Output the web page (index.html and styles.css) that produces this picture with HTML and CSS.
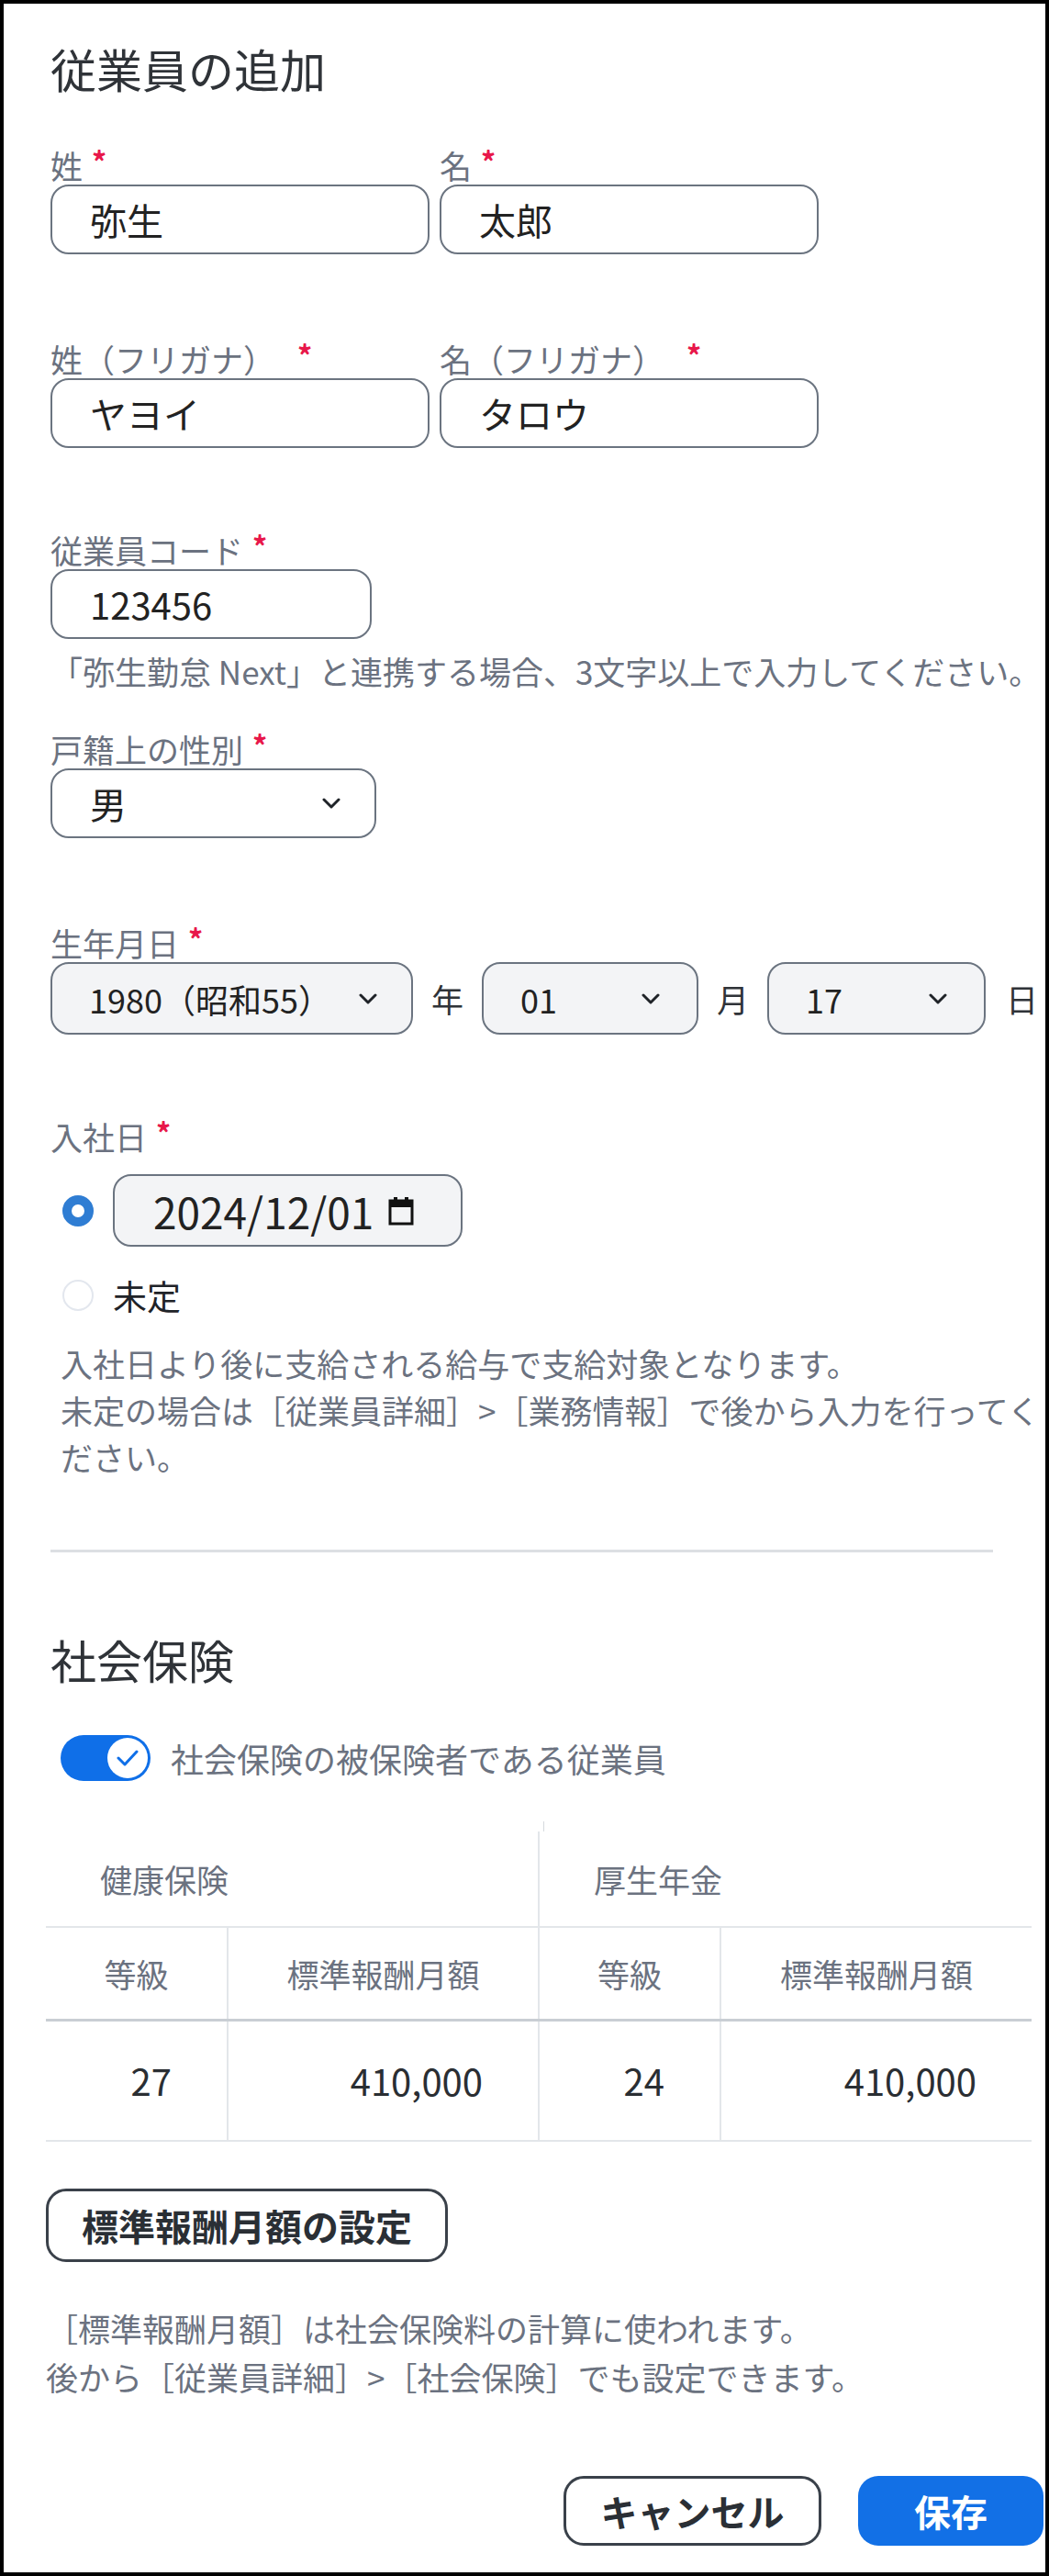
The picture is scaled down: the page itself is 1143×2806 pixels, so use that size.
FILE: index.html
```html
<!DOCTYPE html>
<html lang="ja">
<head>
<meta charset="utf-8">
<title>従業員の追加</title>
<link rel="stylesheet" href="styles.css">
</head>
<body>
<div class="dialog">
  <h1 class="title">従業員の追加</h1>

  <div class="form">
    <div class="field pair">
      <div class="col">
        <div class="label">姓<span class="req">*</span></div>
        <div class="input">弥生</div>
      </div>
      <div class="col">
        <div class="label">名<span class="req">*</span></div>
        <div class="input">太郎</div>
      </div>
    </div>

    <div class="field field-kana pair">
      <div class="col">
        <div class="label">姓（フリガナ）<span class="req req-wide">*</span></div>
        <div class="input">ヤヨイ</div>
      </div>
      <div class="col">
        <div class="label">名（フリガナ）<span class="req req-wide">*</span></div>
        <div class="input">タロウ</div>
      </div>
    </div>

    <div class="field field-help">
      <div class="label">従業員コード<span class="req">*</span></div>
      <div class="input input-code">123456</div>
      <div class="help help-code">「弥生勤怠 Next」と連携する場合、3文字以上で入力してください。</div>
    </div>

    <div class="field">
      <div class="label">戸籍上の性別<span class="req">*</span></div>
      <div class="input select select-gender">
        <span>男</span>
        <svg class="chev" viewBox="0 0 20 12" width="20" height="12"><path d="M2 2 L10 10 L18 2" fill="none" stroke="#1f2328" stroke-width="3" stroke-linecap="round" stroke-linejoin="round"/></svg>
      </div>
    </div>

    <div class="field field-birth">
      <div class="label">生年月日<span class="req">*</span></div>
      <div class="date-selects">
        <div class="input select select-filled select-year">
          <span>1980（昭和55）</span>
          <svg class="chev" viewBox="0 0 20 12" width="20" height="12"><path d="M2 2 L10 10 L18 2" fill="none" stroke="#1f2328" stroke-width="3" stroke-linecap="round" stroke-linejoin="round"/></svg>
        </div>
        <span class="unit">年</span>
        <div class="input select select-filled select-month">
          <span>01</span>
          <svg class="chev" viewBox="0 0 20 12" width="20" height="12"><path d="M2 2 L10 10 L18 2" fill="none" stroke="#1f2328" stroke-width="3" stroke-linecap="round" stroke-linejoin="round"/></svg>
        </div>
        <span class="unit">月</span>
        <div class="input select select-filled select-day">
          <span>17</span>
          <svg class="chev" viewBox="0 0 20 12" width="20" height="12"><path d="M2 2 L10 10 L18 2" fill="none" stroke="#1f2328" stroke-width="3" stroke-linecap="round" stroke-linejoin="round"/></svg>
        </div>
        <span class="unit unit-last">日</span>
      </div>
    </div>

    <div class="field-join">
      <div class="label">入社日<span class="req">*</span></div>
      <div class="radio-group">
        <div class="radio-row">
          <span class="radio radio-on"></span>
          <div class="input date-input">
            <span>2024/12/01</span>
            <svg class="cal" viewBox="0 0 28 32" width="28" height="32"><rect x="2" y="5" width="24" height="25" fill="none" stroke="#111" stroke-width="3"/><rect x="2" y="5" width="24" height="7" fill="#111"/><rect x="6" y="1" width="4" height="6" fill="#111"/><rect x="18" y="1" width="4" height="6" fill="#111"/></svg>
          </div>
        </div>
        <div class="radio-row radio-row-text">
          <span class="radio"></span>
          <span class="radio-text">未定</span>
        </div>
      </div>
      <div class="help help-join">入社日より後に支給される給与で支給対象となります。<br>未定の場合は［従業員詳細］&gt;［業務情報］で後から入力を行ってください。</div>
    </div>
  </div>

  <div class="divider"></div>

  <h2 class="section-title">社会保険</h2>

  <div class="toggle-row">
    <span class="toggle"><span class="knob"><svg viewBox="0 0 24 18" width="24" height="18"><path d="M2 9 L9 16 L22 2" fill="none" stroke="#0f6fe8" stroke-width="3" stroke-linecap="round" stroke-linejoin="round"/></svg></span></span>
    <span class="toggle-label">社会保険の被保険者である従業員</span>
  </div>

  <div class="table-wrap">
    <span class="tick"></span>
    <table class="grade-table">
      <colgroup>
        <col class="c-grade"><col class="c-amount"><col class="c-grade"><col class="c-amount">
      </colgroup>
      <thead>
        <tr class="head1">
          <th colspan="2" class="group">健康保険</th>
          <th colspan="2" class="group">厚生年金</th>
        </tr>
        <tr class="head2">
          <th>等級</th><th>標準報酬月額</th><th>等級</th><th>標準報酬月額</th>
        </tr>
      </thead>
      <tbody>
        <tr>
          <td>27</td><td>410,000</td><td>24</td><td>410,000</td>
        </tr>
      </tbody>
    </table>
  </div>

  <button class="btn btn-outline btn-setting" type="button">標準報酬月額の設定</button>

  <div class="help help-si">［標準報酬月額］は社会保険料の計算に使われます。<br>後から［従業員詳細］&gt;［社会保険］でも設定できます。</div>

  <div class="footer">
    <button class="btn btn-outline btn-cancel" type="button">キャンセル</button>
    <button class="btn btn-primary btn-save" type="button">保存</button>
  </div>
</div>
</body>
</html>
```

FILE: styles.css
```css
* { box-sizing: border-box; }
html, body { margin: 0; padding: 0; background: #fff; }
body {
  font-family: "Noto Sans CJK JP", "Noto Sans", sans-serif;
  color: #2f3338;
}
.dialog {
  width: 1143px;
  height: 2806px;
  border: 4px solid #000;
  padding: 40px 2px 0 46px;
  overflow: hidden;
}
.title {
  margin: 0 0 0 5px;
  font-size: 50px;
  line-height: 60px;
  font-weight: 400;
  color: #2f3338;
}
.form { padding-left: 5px; margin-top: 55px; }
.field { margin-bottom: 93px; }
.field-kana { margin-bottom: 90px; }
.field-help { margin-bottom: 43px; }
.pair { display: flex; gap: 11px; }
.pair .col { width: 413px; }

.label {
  display: flex;
  font-size: 35px;
  line-height: 42px;
  color: #6b7280;
}
.req {
  color: #e8174a;
  font-size: 32px;
  line-height: 32px;
  margin-left: 10px;
  font-weight: 700;
}
.req-wide { margin-left: 24px; }

.input {
  height: 76px;
  border: 2px solid #6b7480;
  border-radius: 20px;
  padding: 0 0 0 41px;
  font-size: 40px;
  display: flex;
  align-items: center;
  color: #222;
  background: #fff;
}
.input-code { width: 350px; }

.help {
  font-size: 35px;
  line-height: 42px;
  color: #6b7280;
}
.help-code { margin-top: 14px; white-space: nowrap; }

.select { justify-content: space-between; padding-right: 37px; }
.select-gender { width: 355px; }
.chev { display: block; flex: none; }

.field-birth { margin-bottom: 90px; }
.date-selects { display: flex; align-items: center; }
.select-filled {
  background: #f3f4f6;
  height: 79px;
  font-size: 36px;
  padding-left: 40px;
  flex: none;
}
.select-year { width: 395px; }
.select-month { width: 236px; padding-right: 40px; }
.select-day { width: 238px; padding-right: 40px; }
.unit {
  font-size: 35px;
  color: #2f3338;
  margin: 0 20px;
  flex: none;
}
.unit-last { margin: 0 0 0 22px; }

.radio-group { padding-left: 13px; margin-top: 20px; }
.radio-row { display: flex; align-items: center; gap: 21px; }
.radio {
  width: 34px; height: 34px; border-radius: 50%;
  border: 2px solid #e3e7ee;
  background: #fff;
  flex: none;
}
.radio-on { border: 10px solid #2f7dd3; }
.date-input {
  width: 381px;
  height: 79px;
  background: #f3f4f6;
  font-size: 46px;
  padding-left: 42px;
  gap: 16px;
}
.cal { display: block; flex: none; }
.radio-row-text { margin-top: 33px; height: 40px; }
.radio-text { font-size: 37px; color: #1f2328; }
.help-join { padding-left: 11px; margin-top: 28px; line-height: 51px; }

.divider {
  margin: 76px 0 0 5px;
  width: 1027px;
  height: 3px;
  background: #dcdfe3;
}
.section-title {
  margin: 86px 0 0 5px;
  font-size: 50px;
  line-height: 60px;
  font-weight: 400;
  color: #2f3338;
}
.toggle-row { display: flex; align-items: center; gap: 22px; margin: 52px 0 0 16px; }
.toggle {
  width: 98px; height: 50px; border-radius: 25px;
  background: #0f6fe8;
  display: flex; align-items: center; justify-content: flex-end;
  padding-right: 3px;
}
.knob {
  width: 44px; height: 44px; border-radius: 50%;
  background: #fff;
  display: flex; align-items: center; justify-content: center;
}
.knob svg { display: block; }
.toggle-label { font-size: 36px; color: #6b7280; }

.table-wrap { position: relative; margin-top: 43px; padding-top: 11px; width: 1073px; }
.tick {
  position: absolute; left: 542px; top: 0;
  width: 1px; height: 11px; background: #d6dade;
}
.grade-table { border-collapse: collapse; width: 1073px; table-layout: fixed; }
.c-grade { width: 198px; }
.c-amount { width: 339px; }
.grade-table th, .grade-table td { padding: 0; }
.grade-table th { font-weight: 400; font-size: 35px; color: #6b7280; }
.head1 th { height: 104px; text-align: left; padding-left: 59px; border-bottom: 2px solid #e3e6ea; }
.head1 th + th { border-left: 2px solid #e3e6ea; }
.head2 th { height: 101px; text-align: center; border-bottom: 3px solid #c9ced4; }
.head2 th + th, .grade-table td + td { border-left: 2px solid #e3e6ea; }
.grade-table td {
  height: 132px;
  text-align: right;
  padding-right: 60px;
  font-size: 40px;
  color: #2a2e33;
  border-bottom: 2px solid #e3e6ea;
}

.btn {
  font-family: inherit;
  font-weight: 700;
  font-size: 40px;
  border-radius: 22px;
  cursor: pointer;
  display: flex;
  align-items: center;
  justify-content: center;
  padding: 0;
}
.btn-outline { background: #fff; border: 3px solid #3a414a; color: #2a2f35; }
.btn-setting { margin-top: 51px; width: 438px; height: 80px; }
.help-si { margin-top: 45px; line-height: 53px; }
.footer { display: flex; justify-content: flex-end; gap: 40px; margin-top: 82px; }
.btn-cancel { width: 281px; height: 76px; }
.btn-primary { background: #1270e6; border: 0; color: #fff; }
.btn-save { width: 202px; height: 76px; }
```
